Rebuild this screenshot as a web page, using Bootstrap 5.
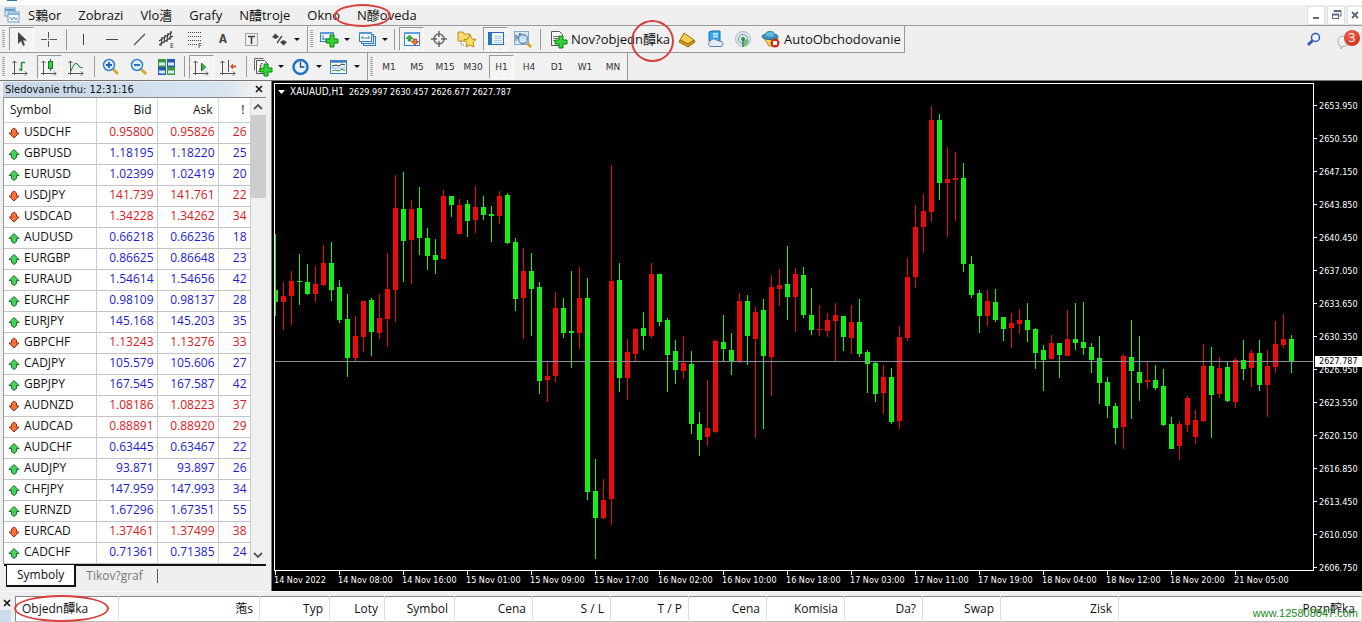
<!DOCTYPE html>
<html lang="sk">
<head>
<meta charset="utf-8">
<meta name="viewport" content="width=device-width, initial-scale=1">
<title>XAUAUD,H1</title>
<link href="https://cdn.jsdelivr.net/npm/bootstrap@5.3.0/dist/css/bootstrap.min.css" rel="stylesheet">
<style>
:root{--face:#efefef;--line:#9a9a9a}
body{font-family:"Open Sans","Noto Sans CJK SC",sans-serif;font-size:12px;line-height:16px;color:#111;background:var(--face)}
.topstrip{height:5px;background:#fff}
.topstrip span{width:10px;height:1px;margin-left:7px;background:#2f6f9e}
.menubar{height:21px;border-bottom:1px solid var(--line);font-size:13px;line-height:20px}
.menubar ul{gap:17px;margin-left:8px}
.menubar a{color:#111;text-decoration:none;display:block}
.winbtns{gap:2px;margin-right:-3px}
.winbtn{width:18px;height:19px;background:#fff;border:1px solid #e0e0e0;padding:0;display:flex;align-items:center;justify-content:center}
.toolrow{height:27px}
.tgroup{height:27px;border-right:1px solid var(--line);border-bottom:1px solid var(--line);background:#f1f1f1}
.toolrow.second .tgroup{border-bottom:0}
.grip{width:7px;padding:4px 2px}
.grip i{display:block;width:3px;height:100%;background:repeating-linear-gradient(#a5a5a5 0 1px,transparent 1px 2px)}
.vsep{width:6px;height:21px;background:linear-gradient(var(--line),var(--line)) 3px 0/1px 100% no-repeat}
.tb{width:28px;height:26px;padding:0;border:0;background:none;display:flex;align-items:center;justify-content:center;color:#444;flex:none}
.tb.on{width:25px;height:24px;margin:0 1px 0 2px;border:1px solid;border-color:#999 #fff #fff #999;background:repeating-conic-gradient(#fff 0 25%,#ececec 0 50%) 0 0/2px 2px}
.tb.tf{font:9px "DejaVu Sans",sans-serif;color:#333}
.tb.wide{width:auto;font-size:13px;color:#111;gap:3px;padding:0 3px 0 5px}
.dropcaret{width:10px;height:26px;border:0;background:none;padding:0 2px 0 0;display:flex;align-items:center;justify-content:center;flex:none}
.dropcaret::after{content:"";border:3px solid transparent;border-top-color:#111;margin-top:3px}
svg.ic{width:20px;height:20px;flex:none;display:block}
.ring{position:absolute;pointer-events:none;border:2px solid #d8403f;border-radius:50%;z-index:5}
.ring.r-menu{left:-23px;top:-1px;width:57px;height:23px}
.ring.r-order{right:-1px;top:-6px;width:43px;height:42px}
.ring.r-col{left:-2px;top:-2px;width:95px;height:27px}
.alertcount{position:absolute;left:14px;top:3px;width:16px;height:16px;border-radius:50%;background:radial-gradient(circle at 40% 30%,#f0664d,#c8200f);color:#fff;line-height:16px;text-align:center}
.workarea{border-top:1px solid #777}
.watchpanel{width:272px;flex:none;border-right:1px solid #777;padding:1px 5px 0 3px}
.wtitle{height:15px;padding-left:2px;font:11px/15px "DejaVu Sans Condensed",sans-serif;background:linear-gradient(90deg,#c5d5e6,#d9e5f1 90%,var(--face))}
.closex{border:0;background:none;padding:0;width:14px;height:14px;display:flex;align-items:center;justify-content:center}
.listbox{border-top:1px solid #888;border-left:1px solid #999}
.quotes{table-layout:fixed;width:246px;background:#fff;border-collapse:collapse}
.quotes th{height:24px;font-weight:400;border-bottom:1px solid #ccc;border-right:1px solid #ddd;padding:0 5px 0 6px}
.quotes td{height:21px;line-height:16px;border-right:1px solid #ccc;border-bottom:1px solid #c4c4c4;padding:0 3px 2px 4px}
.quotes td:first-child svg{width:12px;height:12px;margin:0 4px 0 0;vertical-align:-3px}
.quotes .up td{color:#1c1ccf}.quotes .dn td{color:#d9161c}
.quotes tr td:first-child{color:#111}
.sbar{width:16px;background:#f0f0f0}
.sbar button{height:17px;border:0;background:none;padding:0;display:flex;align-items:center;justify-content:center}
.sbar .thumb{height:83px;background:#cdcdcd}
.wtabs{border-top:2px solid #111;margin-left:1px;padding-left:2px;height:23px}
.wtabs button{border:0;background:none;padding:0 10px;height:21px;line-height:18px;color:#777}
.wtabs button.sel{background:#fff;color:#111;border:solid #111;border-width:0 2px 2px 1px;margin-top:-1px;height:22px}
.wtabs i{width:1px;height:14px;margin:3px 0 0 4px;background:#555}
.chart{background:#000;color:#fff;display:grid;grid-template-columns:minmax(0,1fr) 48px;grid-template-rows:488px 18px;padding:2px 0 2px 2px;font:9px/12px "DejaVu Sans Condensed",sans-serif;overflow:hidden}
.plot{border:1px solid #fff;position:relative;overflow:hidden}
.plot svg.candles{width:100%;height:100%;display:block}
.ohlc{position:absolute;left:3px;top:2px;gap:5px}
.ohlc b{font-weight:400;font-size:10px}
.paxis{grid-column:2;grid-row:1/3;position:relative;padding-top:6px;height:506px;overflow:hidden}
.paxis div.pl{height:33px;display:flex;align-items:center;gap:2px}
.paxis div.pl::before{content:"";width:3px;height:1px;background:#fff}
.ptag{position:absolute;left:1px;top:273px;width:47px;height:11px;line-height:11px;background:#fff;color:#000;padding-left:4px}
.taxis{overflow:hidden}
.taxis div{width:64px;flex:none;position:relative;padding-top:3px;white-space:nowrap}
.taxis div::before{content:"";position:absolute;left:1px;top:0;width:1px;height:4px;background:#fff}
.terminal{border-top:1px solid #fafafa;height:31px;padding-top:4px;position:relative}
.tside{width:15px;flex:none}
.tside .tabblue{width:11px;height:13px;background:#ccdbeb}
.orders{table-layout:fixed;width:100%;border:1px solid;border-color:#888 #bbb #bbb #888}
.orders th{height:24px;font-weight:400;background:#fff;border-right:1px solid #ddd;text-align:right;padding:0 6px;position:relative;white-space:nowrap}
.sitemark{position:absolute;right:4px;top:15px;font:11px/13px "Liberation Sans",sans-serif;color:#1c8a1c;text-decoration:none}
</style>
</head>
<body class="d-flex flex-column min-vh-100 overflow-hidden">
<svg class="d-none">
 <defs>
  <g id="plus"><path d="M-2-6h4v4h4v4h-4v4h-4v-4h-4v-4h4z" fill="#35d435" stroke="#0d7f14"/></g>
  <g id="axes"><path d="M3.500 18V4M1.500 6l2-2 2 2M1 16.500h15M14 14.500l2 2-2 2" fill="none" stroke="#555"/></g>
 </defs>
</svg>
<div class="topstrip d-flex"><span></span></div>

<nav class="menubar d-flex align-items-center" aria-label="Menu">
 <svg class="ic ms-1" style="width:16px;height:16px" viewBox="0 0 16 16"><rect x="1" y="1" width="10" height="8" fill="#e8f2fb" stroke="#6a9cc8"/><path d="M1 3h10" stroke="#6a9cc8" stroke-width="2"/><rect x="4" y="5" width="11" height="10" fill="#f4f9fe" stroke="#6a9cc8"/><path d="M4 7h11" stroke="#8ab4d8" stroke-width="2"/><path d="M6 10l2 3 2-3 2 3 1-2" fill="none" stroke="#5888b8"/></svg>
 <ul class="list-unstyled d-flex mb-0">
  <li><a href="#">S鷅or</a></li><li><a href="#">Zobrazi</a></li><li><a href="#">Vlo瀒</a></li><li><a href="#">Grafy</a></li><li><a href="#">N醩troje</a></li><li><a href="#">Okno</a></li>
  <li class="position-relative"><a href="#">N醦oveda</a><span class="ring r-menu"></span></li>
 </ul>
 <div class="winbtns ms-auto d-flex">
  <button class="winbtn" aria-label="Min"><svg width="16" height="16"><path d="M5 11h6" stroke="#5a6b80" stroke-width="2"/></svg></button>
  <button class="winbtn" aria-label="Restore"><svg width="16" height="16"><path d="M6 5V3.500h7V9h-2M6 4.500h7" fill="none" stroke="#5a6b80"/><rect x="4.500" y="7.500" width="6" height="4" fill="none" stroke="#5a6b80"/><path d="M4 7.500h7" stroke="#5a6b80" stroke-width="2"/></svg></button>
  <button class="winbtn" aria-label="Close"><svg width="16" height="16"><path d="M4 5l6 6M10 5l-6 6" stroke="#5a6b80" stroke-width="2"/></svg></button>
 </div>
</nav>

<div class="toolrow d-flex">
 <div class="tgroup d-flex align-items-center pe-1">
  <div class="grip align-self-stretch"><i></i></div>
  <button class="tb on" aria-label="Cursor"><svg class="ic" viewBox="0 0 20 20"><path d="M6 3v12l3-3 2 5 2-1-2-4.500h4z" fill="#444"/></svg></button>
  <button class="tb" aria-label="Crosshair"><svg class="ic" viewBox="0 0 20 20"><path d="M9.500 3v6M9.500 12v6M2 10.500h6M11 10.500h7" stroke="#555"/><path d="M9 10.500h1" stroke="#555"/></svg></button>
  <span class="vsep"></span>
  <button class="tb" aria-label="Vertical"><svg class="ic" viewBox="0 0 20 20"><path d="M10.500 5v11" stroke="#444"/></svg></button>
  <button class="tb" aria-label="Horizontal"><svg class="ic" viewBox="0 0 20 20"><path d="M5 10.500h12" stroke="#444"/></svg></button>
  <button class="tb" aria-label="Trend"><svg class="ic" viewBox="0 0 20 20"><path d="M5 16L16 5" stroke="#555" stroke-width="1.200"/></svg></button>
  <button class="tb" aria-label="Channel"><svg class="ic" viewBox="0 0 20 20"><path d="M2 12L15 3M2 16L16 7M5 8l-1 9M8 6L7 14M11 4l-1 9M14 2l-1 9" stroke="#444" stroke-width="1.200"/><text x="13" y="19" font-size="7" fill="#222">E</text></svg></button>
  <button class="tb" aria-label="Fibo"><svg class="ic" viewBox="0 0 20 20"><path d="M3 3.500h14M3 7.500h14M3 11.500h14M3 15.500h9" stroke="#444" stroke-dasharray="1 1"/><text x="13" y="19" font-size="7" fill="#222">F</text></svg></button>
  <button class="tb" style="font:bold 13px 'Liberation Mono',monospace">A</button>
  <button class="tb" aria-label="Label"><svg class="ic" viewBox="0 0 20 20"><rect x="4.500" y="4.500" width="12" height="12" fill="none" stroke="#555" stroke-dasharray="1 1"/><path d="M7 7.500h7M10.500 7v8" stroke="#444" stroke-width="1.600"/></svg></button>
  <button class="tb" aria-label="Arrows"><svg class="ic" viewBox="0 0 20 20"><path d="M3 8l3.500-3.500L10 8l-3.500 2zM11 13l3.500-2 3.500 2-3.500 3.500z" fill="#444"/><path d="M8 14l5-7" stroke="#444" stroke-width="1.300"/></svg></button>
  <button class="dropcaret" aria-label="More"></button>
 </div>
 <div class="tgroup d-flex align-items-center">
  <div class="grip align-self-stretch"><i></i></div>
  <button class="tb" aria-label="New chart"><svg class="ic" viewBox="0 0 20 20"><rect x="1.500" y="3.500" width="13" height="9" fill="#eaf4fc" stroke="#3a7ab8"/><path d="M1 4h14" stroke="#5a9ad4" stroke-width="2"/><path d="M4 6v5M3 10h8" stroke="#4a80b0"/><use href="#plus" x="13" y="12"/></svg></button>
  <button class="dropcaret" aria-label="More"></button>
  <button class="tb" aria-label="Profiles"><svg class="ic" viewBox="0 0 20 20"><rect x="6.500" y="7.500" width="12" height="9" fill="#dcebf8" stroke="#3a7ab8"/><rect x="4.500" y="5.500" width="12" height="9" fill="#dcebf8" stroke="#3a7ab8"/><rect x="2.500" y="3.500" width="12" height="9" fill="#f4fafe" stroke="#3a7ab8"/><path d="M2 4h13" stroke="#5a9ad4" stroke-width="2"/><path d="M5 7v3M12 7v3M5 9h7" stroke="#4a80b0"/></svg></button>
  <button class="dropcaret" aria-label="More"></button>
  <span class="vsep"></span>
  <button class="tb on" aria-label="Market watch"><svg class="ic" viewBox="0 0 20 20"><rect x="2.500" y="3.500" width="15" height="13" fill="#fafdff" stroke="#3a80c0"/><path d="M2 4h16" stroke="#5aa0dc" stroke-width="2"/><path d="M7.500 6l3.500 3.500H9V12H6V9.500H4z" fill="#35b835" stroke="#187018" stroke-width=".6"/><path d="M13 16l-3.500-3.500h2V10h3v2.500h2z" fill="#f08030" stroke="#b02818" stroke-width=".8"/></svg></button>
  <button class="tb" aria-label="Data window"><svg class="ic" viewBox="0 0 20 20"><circle cx="10" cy="10" r="5" fill="none" stroke="#666" stroke-width="1.500"/><path d="M10 2v6M10 12v6M2 10h6M12 10h6" stroke="#666" stroke-width="1.500"/></svg></button>
  <button class="tb" aria-label="Navigator"><svg class="ic" viewBox="0 0 20 20"><path d="M1 3h5l1 2h6v7H1z" fill="#f8dc70" stroke="#b89020"/><path d="M4 12v4h4" fill="none" stroke="#777" stroke-dasharray="1 1"/><path d="M13 6l2 4 4 .5-3 3 1 4.500-4-2-4 2 1-4.500-3-3 4-.5z" fill="#fce060" stroke="#b88810"/></svg></button>
  <button class="tb on" aria-label="Terminal"><svg class="ic" viewBox="0 0 20 20"><rect x="2.500" y="3.500" width="15" height="12" fill="#f6faff" stroke="#2a68b0"/><rect x="3" y="4" width="3" height="11" fill="#2a78c8"/><path d="M8 7.500h8M8 9.500h8M8 11.500h8M8 13.500h8" stroke="#aac8e8"/></svg></button>
  <button class="tb" aria-label="Tester"><svg class="ic" viewBox="0 0 20 20"><rect x="1.500" y="2.500" width="14" height="13" fill="#d8e8f6" stroke="#88a8c8"/><path d="M3 12V6l2 4 2-6 2 6 2-4 2 5" fill="none" stroke="#507090"/><circle cx="10" cy="10" r="4.500" fill="#cfe8fa" fill-opacity=".8" stroke="#5a90c0" stroke-width="1.300"/><path d="M14 14l4 4" stroke="#d8a020" stroke-width="2.500"/></svg></button>
  <span class="vsep"></span>
  <button class="tb wide position-relative"><svg class="ic" viewBox="0 0 20 20"><path d="M3.500 2.500h8l3 3v11h-11z" fill="#fff" stroke="#555"/><path d="M5 7.500h7M5 9.500h7M5 11.500h5" stroke="#777"/><use href="#plus" x="13" y="13"/></svg>Nov?objedn醰ka<span class="ring r-order"></span></button>
  <button class="tb" aria-label="MetaEditor"><svg class="ic" viewBox="0 0 20 20"><path d="M7 4l10 7-6 4-8-4z" fill="#f8d050" stroke="#9a6c08"/><path d="M3 11l-1 2 9 5 7-5-1-2-6 4z" fill="#d89818" stroke="#9a6c08"/></svg></button>
  <button class="tb" aria-label="VPS"><svg class="ic" viewBox="0 0 20 20"><path d="M4 3l3-1h8v10H4z" fill="#38a8e8" stroke="#1870b0"/><path d="M8 5h5M8 7.500h5" stroke="#d8f0fc" stroke-width="1.500"/><path d="M5 17.500a3 3 0 0 1 0-5 4 4 0 0 1 7-1 3 3 0 0 1 3 1 2.500 2.500 0 0 1 1 5z" fill="#e4ecf6" stroke="#6080a8"/></svg></button>
  <button class="tb" aria-label="Signals"><svg class="ic" viewBox="0 0 20 20"><circle cx="10" cy="10" r="7.500" fill="#dce8ee" stroke="#a8bcc8"/><path d="M10 10l6 1a8 8 0 0 1-6 7z" fill="#80c080"/><circle cx="10" cy="10" r="4.500" fill="none" stroke="#7098b0"/><circle cx="10" cy="10" r="2" fill="#389048"/><path d="M10 10v8" stroke="#389048" stroke-width="1.500"/></svg></button>
  <button class="tb wide ps-1"><svg class="ic" viewBox="0 0 20 20"><path d="M3 9h14l-2 8H8z" fill="#f8d858" stroke="#b08818"/><ellipse cx="9" cy="7.500" rx="8" ry="3" fill="#3a98cc" stroke="#20688c"/><ellipse cx="9" cy="5.500" rx="4.500" ry="3" fill="#60b8e0" stroke="#3888ac"/><circle cx="14" cy="14" r="4.500" fill="#d02c18"/><rect x="12" y="12" width="4" height="4" fill="#fff"/></svg>AutoObchodovanie</button>
 </div>
 <div class="ms-auto d-flex align-items-center gap-1">
  <button class="tb w-auto" aria-label="Search"><svg class="ic" style="width:16px;height:16px" viewBox="0 0 16 16"><circle cx="9.500" cy="5.500" r="4" fill="#eef4fc" stroke="#3058b8" stroke-width="1.500"/><path d="M6.500 8.500L2 13" stroke="#3058b8" stroke-width="2.800"/></svg></button>
  <button class="tb position-relative ms-1 me-1" aria-label="Alerts"><svg class="ic mt-1" viewBox="0 0 20 20"><path d="M4 7a6 5 0 0 1 11 0v4a5 4 0 0 1-6 3l-2 3v-3a4 4 0 0 1-3-4z" fill="#f2f2f2" stroke="#aaa"/></svg><span class="alertcount">3</span></button>
 </div>
</div>

<div class="toolrow second d-flex">
 <div class="tgroup d-flex align-items-center pe-1">
  <div class="grip align-self-stretch"><i></i></div>
  <button class="tb" aria-label="Bars"><svg class="ic" viewBox="0 0 20 20"><use href="#axes"/><path d="M10.500 5v9M8 12.500h2M11 5.500h3" stroke="#2a8a3a" stroke-width="1.500"/></svg></button>
  <button class="tb on" aria-label="Candles"><svg class="ic" viewBox="0 0 20 20"><use href="#axes"/><path d="M10.500 2v12" stroke="#187828"/><rect x="8.500" y="4.500" width="4" height="7" fill="#38d048" stroke="#187828"/></svg></button>
  <button class="tb" aria-label="Line"><svg class="ic" viewBox="0 0 20 20"><use href="#axes"/><path d="M4 14C7 6 9 5 11 8s3 3 5 3" fill="none" stroke="#3a9048" stroke-width="1.200"/></svg></button>
  <span class="vsep"></span>
  <button class="tb" aria-label="Zoom in"><svg class="ic" viewBox="0 0 20 20"><path d="M12 12l5 5" stroke="#d8a828" stroke-width="3"/><circle cx="8" cy="8" r="5.500" fill="#dceefc" stroke="#3a80c8" stroke-width="1.500"/><path d="M5 8h6M8 5v6" stroke="#2060b0" stroke-width="1.800"/></svg></button>
  <button class="tb" aria-label="Zoom out"><svg class="ic" viewBox="0 0 20 20"><path d="M12 12l5 5" stroke="#d8a828" stroke-width="3"/><circle cx="8" cy="8" r="5.500" fill="#dceefc" stroke="#3a80c8" stroke-width="1.500"/><path d="M5 8h6" stroke="#2060b0" stroke-width="1.800"/></svg></button>
  <button class="tb" aria-label="Tile"><svg class="ic" viewBox="0 0 20 20"><rect x="1" y="2" width="8" height="8" fill="#3a9838"/><rect x="10" y="2" width="8" height="8" fill="#2858b0"/><rect x="1" y="10" width="8" height="8" fill="#2858b0"/><rect x="10" y="10" width="8" height="8" fill="#3a9838"/><path d="M2 7h6M11 7h6M2 15h6M11 15h6" stroke="#d8ecf4" stroke-width="3"/></svg></button>
  <span class="vsep"></span>
  <button class="tb on" aria-label="Auto scroll"><svg class="ic" viewBox="0 0 20 20"><use href="#axes"/><path d="M9.500 6l4 4-4 4z" fill="#38b848" stroke="#187828"/></svg></button>
  <button class="tb" aria-label="Shift"><svg class="ic" viewBox="0 0 20 20"><use href="#axes"/><path d="M9.500 3v12" stroke="#555"/><path d="M11 9.500l3-3v2h3v2h-3v2z" fill="#d84828"/></svg></button>
  <span class="vsep"></span>
  <button class="tb" aria-label="Indicators"><svg class="ic" viewBox="0 0 20 20"><path d="M1.500 13.500v-12h9" fill="none" stroke="#666"/><path d="M3.500 3.500h8l3 3v10h-11z" fill="#fff" stroke="#555"/><text x="6" y="13" font-size="9" font-style="italic" fill="#333">f</text><use href="#plus" x="13" y="13"/></svg></button>
  <button class="dropcaret" aria-label="More"></button>
  <button class="tb" aria-label="Periods"><svg class="ic" viewBox="0 0 20 20"><circle cx="9.500" cy="10" r="7" fill="#e4f2fc" stroke="#2270c0" stroke-width="2.500"/><path d="M9.500 5v5h4" fill="none" stroke="#345" stroke-width="1.300"/></svg></button>
  <button class="dropcaret" aria-label="More"></button>
  <button class="tb" aria-label="Templates"><svg class="ic" viewBox="0 0 20 20"><rect x="1.500" y="3.500" width="16" height="13" fill="#f8fcff" stroke="#4080b8"/><path d="M1 4.500h17" stroke="#4080b8" stroke-width="2.500"/><path d="M3 9l4-1 3 1 3-2 3 1" fill="none" stroke="#333"/><path d="M2 11h15" stroke="#88b0d8"/><path d="M3 14l3-1 3 1 4-1.500 3 1" fill="none" stroke="#2a8a3a"/></svg></button>
  <button class="dropcaret" aria-label="More"></button>
 </div>
 <div class="tgroup d-flex align-items-center">
  <div class="grip align-self-stretch"><i></i></div>
  <button class="tb tf">M1</button><button class="tb tf">M5</button><button class="tb tf">M15</button><button class="tb tf">M30</button><button class="tb tf on">H1</button><button class="tb tf">H4</button><button class="tb tf">D1</button><button class="tb tf">W1</button><button class="tb tf">MN</button>
 </div>
</div>

<main class="workarea d-flex flex-grow-1">
 <section class="watchpanel">
  <div class="d-flex">
   <div class="wtitle flex-grow-1">Sledovanie trhu: 12:31:16</div>
   <button class="closex" aria-label="Close"><svg width="8" height="8"><path d="M1 1l6 6M7 1L1 7" stroke="#111" stroke-width="1.600"/></svg></button>
  </div>
  <div class="listbox d-flex">
   <table class="quotes">
    <colgroup><col style="width:92px"><col style="width:61px"><col style="width:61px"><col style="width:32px"></colgroup>
    <thead><tr><th>Symbol</th><th class="text-end">Bid</th><th class="text-end">Ask</th><th class="text-end">!</th></tr></thead>
    <tbody id="quotes"></tbody>
   </table>
   <div class="sbar d-flex flex-column">
    <button aria-label="Up"><svg width="10" height="8"><path d="M1 6l4-4 4 4" fill="none" stroke="#555" stroke-width="1.800"/></svg></button>
    <div class="thumb"></div>
    <button class="mt-auto" aria-label="Down"><svg width="10" height="8"><path d="M1 2l4 4 4-4" fill="none" stroke="#555" stroke-width="1.800"/></svg></button>
   </div>
  </div>
  <div class="wtabs d-flex"><button class="sel">Symboly</button><button>Tikov?graf</button><i></i></div>
 </section>

 <section class="chart flex-grow-1">
  <div class="plot">
   <svg class="candles"><g id="candles" transform="translate(-275,-84)" shape-rendering="crispEdges"></g></svg>
   <div class="ohlc d-flex align-items-center"><svg width="7" height="4"><path d="M0 0h7L3.500 4z" fill="#fff"/></svg><b>XAUAUD,H1</b><span>2629.997 2630.457 2626.677 2627.787</span></div>
  </div>
  <div class="paxis" id="paxis"><span class="ptag">2627.787</span></div>
  <div class="taxis d-flex" id="taxis"></div>
 </section>
</main>

<footer class="terminal d-flex">
 <div class="tside">
  <button class="closex" aria-label="Close"><svg width="8" height="8"><path d="M1 1l6 6M7 1L1 7" stroke="#111" stroke-width="1.600"/></svg></button>
  <div class="tabblue"></div>
 </div>
 <table class="orders">
  <colgroup><col style="width:103px"><col style="width:141px"><col style="width:70px"><col style="width:55px"><col style="width:70px"><col style="width:78px"><col style="width:78px"><col style="width:78px"><col style="width:78px"><col style="width:78px"><col style="width:78px"><col style="width:78px"><col style="width:118px"><col></colgroup>
  <thead><tr><th class="text-start">Objedn醰ka<span class="ring r-col"></span></th><th>萢s</th><th>Typ</th><th>Loty</th><th>Symbol</th><th>Cena</th><th>S / L</th><th>T / P</th><th>Cena</th><th>Komisia</th><th>Da?</th><th>Swap</th><th>Zisk</th><th>Pozn醡ka</th></tr></thead>
 </table>
 <a class="sitemark" href="#">www.125808047.com</a>
</footer>

<script>
// symbol, bid, ask, spread, direction
const quotes = `USDCHF 0.95800 0.95826 26 dn
GBPUSD 1.18195 1.18220 25 up
EURUSD 1.02399 1.02419 20 up
USDJPY 141.739 141.761 22 dn
USDCAD 1.34228 1.34262 34 dn
AUDUSD 0.66218 0.66236 18 up
EURGBP 0.86625 0.86648 23 up
EURAUD 1.54614 1.54656 42 up
EURCHF 0.98109 0.98137 28 up
EURJPY 145.168 145.203 35 up
GBPCHF 1.13243 1.13276 33 dn
CADJPY 105.579 105.606 27 up
GBPJPY 167.545 167.587 42 up
AUDNZD 1.08186 1.08223 37 dn
AUDCAD 0.88891 0.88920 29 dn
AUDCHF 0.63445 0.63467 22 up
AUDJPY 93.871 93.897 26 up
CHFJPY 147.959 147.993 34 up
EURNZD 1.67296 1.67351 55 up
EURCAD 1.37461 1.37499 38 dn
CADCHF 0.71361 0.71385 24 up`.split("\n").map(r => r.split(" "));
const arrow = {
  up: '<svg viewBox="0 0 12 12"><path d="M6 1.500l5 5H8.500v3l-2.500 2-2.500-2v-3H1z" fill="#48d058" stroke="#14702a"/></svg>',
  dn: '<svg viewBox="0 0 12 12"><path d="M6 11l5-5H8.500V3L6 1 3.500 3v3H1z" fill="#f4703c" stroke="#a02c10"/></svg>'
};
document.getElementById("quotes").innerHTML = quotes.map(([s, b, a, p, d]) =>
  `<tr class="${d}"><td>${arrow[d]}${s}</td><td class="text-end">${b}</td><td class="text-end">${a}</td><td class="text-end">${p}</td></tr>`).join("");

// one candle per hour: colour, high, body top, body bottom, low
const candles = `g 234 290 302 316;r 282 296 302 330;r 271 281 296 325;g 254 281 282 305;g 264 282 294 295;r 266 284 294 302;r 245 263 285 286;g 242 263 290 301;g 280 287 320 323;g 294 319 358 377;r 316 336 358 361;r 301 301 337 352;g 298 300 332 356;r 294 318 333 339;r 253 289 319 347;r 175 208 290 322;g 172 209 241 282;r 200 209 240 284;g 187 208 238 255;g 228 238 256 270;g 239 255 260 274;r 190 196 259 259;g 196 196 205 217;r 199 205 234 234;g 200 204 221 237;r 186 207 220 233;g 196 207 215 220;g 206 214 216 242;r 191 196 216 224;g 193 195 243 244;g 238 242 299 311;r 248 271 298 339;g 253 271 289 336;g 282 287 381 394;r 362 376 380 402;r 292 308 376 382;g 298 308 333 338;g 271 331 333 368;r 267 298 333 349;g 278 298 492 500;g 459 491 518 559;r 479 500 518 519;r 165 281 499 525;g 263 280 378 392;r 339 352 378 400;r 328 329 354 361;g 312 328 336 350;r 263 274 336 338;g 274 274 322 326;g 318 320 355 392;g 340 351 370 384;r 336 363 371 379;g 351 364 424 434;g 412 424 440 456;r 380 428 437 446;r 340 341 432 433;g 315 342 349 361;g 333 350 361 375;r 293 301 361 363;g 295 301 336 365;r 307 312 339 438;g 299 310 356 429;r 275 287 357 396;r 269 285 289 306;g 246 284 297 320;r 268 274 297 332;g 267 275 315 318;g 288 315 330 335;r 305 329 330 336;r 313 320 331 337;r 303 315 321 361;g 316 316 337 351;r 305 322 338 354;g 299 322 354 357;g 350 352 364 393;g 362 363 394 402;r 365 377 393 414;g 368 377 422 424;r 326 337 421 429;r 258 277 338 341;r 205 227 277 288;r 194 211 227 253;r 106 120 212 222;g 114 120 183 200;r 147 179 183 237;r 152 178 180 221;g 163 178 264 272;g 256 264 295 298;g 290 293 316 333;r 290 301 316 326;g 289 302 320 322;g 317 317 329 341;r 313 323 328 348;r 309 320 324 334;g 303 320 330 342;g 328 329 353 369;g 345 350 360 391;r 335 343 359 359;g 343 343 355 378;r 310 339 356 356;g 303 339 343 350;g 302 342 348 355;g 343 347 360 373;g 336 358 383 404;g 377 382 406 418;g 403 406 428 444;r 354 356 427 449;g 320 357 371 419;g 336 372 383 401;r 361 380 382 389;g 365 380 388 390;g 369 386 425 426;g 417 424 449 449;r 421 424 446 460;r 396 398 425 432;r 410 420 437 444;r 344 366 421 422;g 347 366 395 438;r 357 368 394 398;g 362 367 401 402;r 358 360 402 408;g 340 360 369 380;r 350 353 368 387;g 340 353 385 391;r 350 366 385 417;r 321 344 367 373;r 314 339 345 348;g 335 339 362 373`.split(";").map(c => c.split(" "));
const colour = { g: "#14f014", r: "#ea0c0c" };
const svgRows = candles.map(([c, hi, top, bot, lo], i) => {
  const x = 275 + i * 8;
  return `<g fill="${colour[c]}"><rect x="${x}" y="${hi}" width="1" height="${lo - hi}"/><rect x="${x - 2}" y="${top}" width="5" height="${bot - top}"/></g>`;
}).join("");
document.getElementById("candles").innerHTML =
  svgRows + '<rect x="275" y="361" width="4000" height="1" fill="#8a949c"/>';

const prices = "2653.950 2650.550 2647.150 2643.850 2640.450 2637.050 2633.650 2630.350 2626.950 2623.550 2620.150 2616.850 2613.450 2610.050 2606.750".split(" ");
document.getElementById("paxis").insertAdjacentHTML("afterbegin", prices.map(p => `<div class="pl">${p}</div>`).join(""));
const times = ["14 Nov 2022","14 Nov 08:00","14 Nov 16:00","15 Nov 01:00","15 Nov 09:00","15 Nov 17:00","16 Nov 02:00","16 Nov 10:00","16 Nov 18:00","17 Nov 03:00","17 Nov 11:00","17 Nov 19:00","18 Nov 04:00","18 Nov 12:00","18 Nov 20:00","21 Nov 05:00"];
document.getElementById("taxis").innerHTML = times.map(t => `<div>${t}</div>`).join("");
</script>
<script src="https://cdn.jsdelivr.net/npm/bootstrap@5.3.0/dist/js/bootstrap.bundle.min.js"></script>
</body>
</html>
